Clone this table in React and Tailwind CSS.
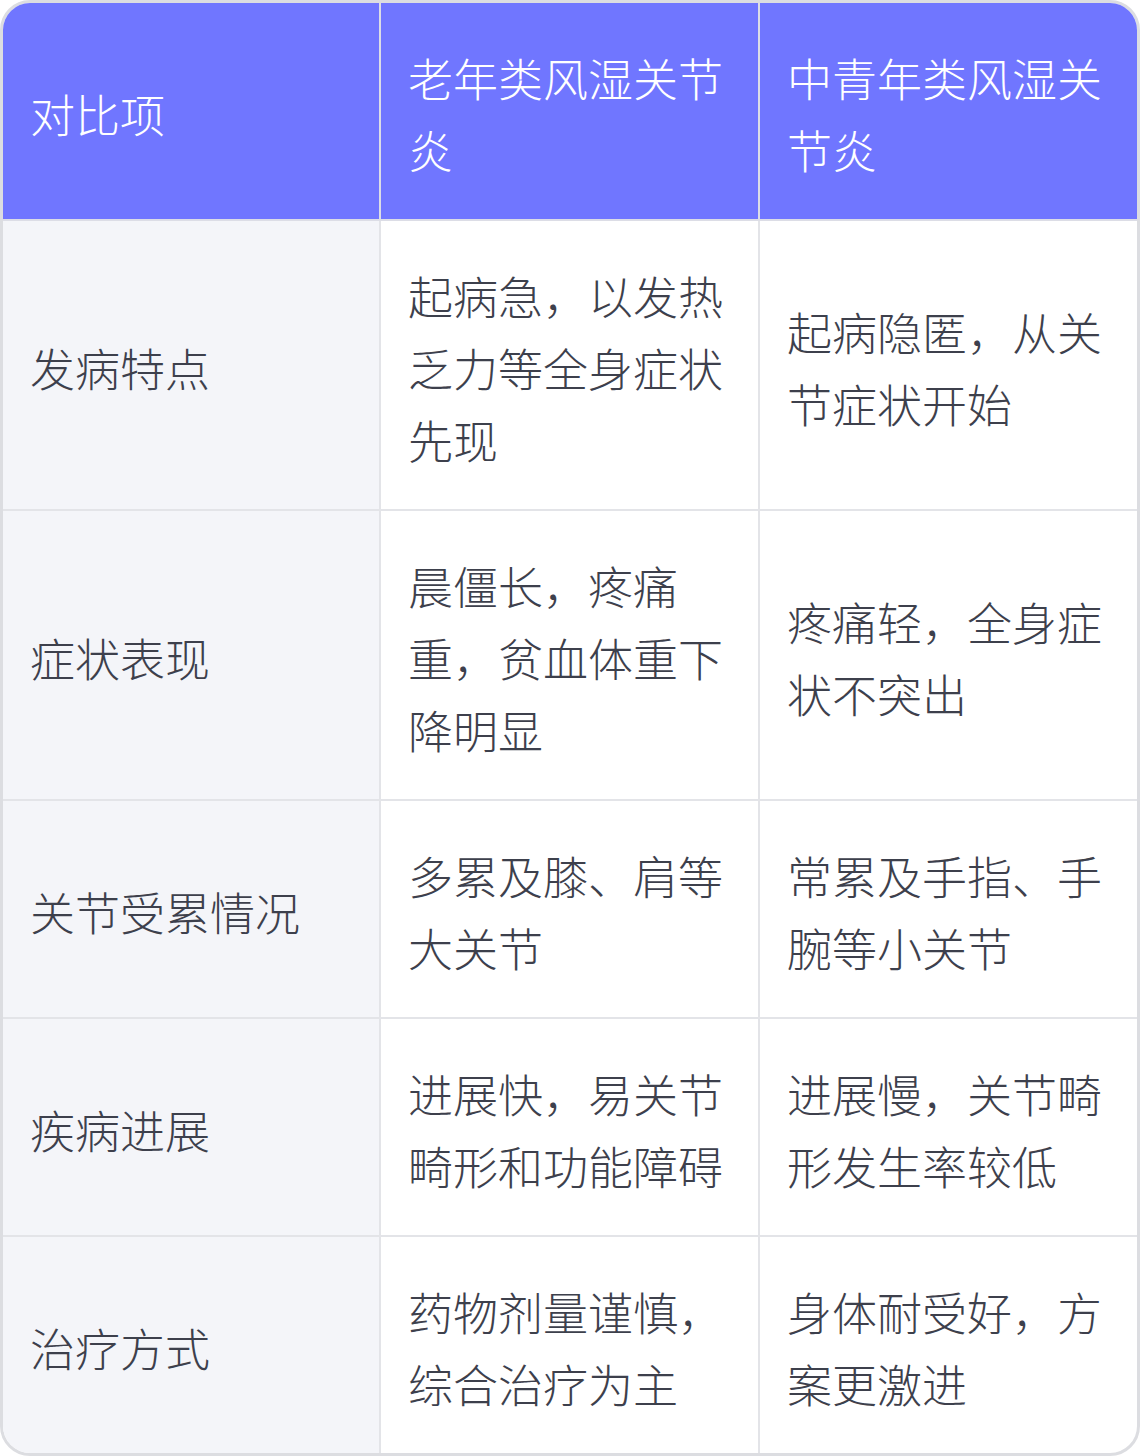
const rows = [
  ['发病特点', '起病急，以发热乏力等全身症状先现', '起病隐匿，从关节症状开始'],
  ['症状表现', '晨僵长，疼痛重，贫血体重下降明显', '疼痛轻，全身症状不突出'],
  ['关节受累情况', '多累及膝、肩等大关节', '常累及手指、手腕等小关节'],
  ['疾病进展', '进展快，易关节畸形和功能障碍', '进展慢，关节畸形发生率较低'],
  ['治疗方式', '药物剂量谨慎，综合治疗为主', '身体耐受好，方案更激进'],
];

export default function App() {
  return (
    <div className="w-[1140px] bg-white font-['Noto_Sans_CJK_SC','Noto_Sans',sans-serif]">
      <div className="rounded-[30px] border-[3px] border-[#dcdde1] overflow-hidden">
        <table className="w-full table-fixed border-collapse text-[45px] leading-[72px] font-light">
          <thead>
            <tr className="bg-[#7076ff] text-white">
              <th className="w-[377px] text-left font-light align-middle px-[27px] pt-[39px] pb-[33px] border-r-2 border-b-2 border-[#dcdde6]">对比项</th>
              <th className="w-[379px] text-left font-light align-middle px-[27px] pt-[39px] pb-[33px] border-r-2 border-b-2 border-[#dcdde6]">老年类风湿关节炎</th>
              <th className="text-left font-light align-middle px-[27px] pt-[39px] pb-[33px] border-b-2 border-[#dcdde6]">中青年类风湿关节炎</th>
            </tr>
          </thead>
          <tbody className="text-[#3d404c]">
            {rows.map((r, i) => {
              const last = i === rows.length - 1;
              return (
                <tr key={r[0]}>
                  <td className={`bg-[#f4f5f9] align-middle px-[27px] pt-[39px] pb-[33px] border-r-2 border-[#e3e4e8] ${last ? '' : 'border-b-2'}`}>{r[0]}</td>
                  <td className={`align-middle px-[27px] pt-[39px] pb-[33px] border-r-2 border-[#e3e4e8] ${last ? '' : 'border-b-2'}`}>{r[1]}</td>
                  <td className={`align-middle px-[27px] pt-[39px] pb-[33px] border-[#e3e4e8] ${last ? '' : 'border-b-2'}`}>{r[2]}</td>
                </tr>
              );
            })}
          </tbody>
        </table>
      </div>
    </div>
  );
}
